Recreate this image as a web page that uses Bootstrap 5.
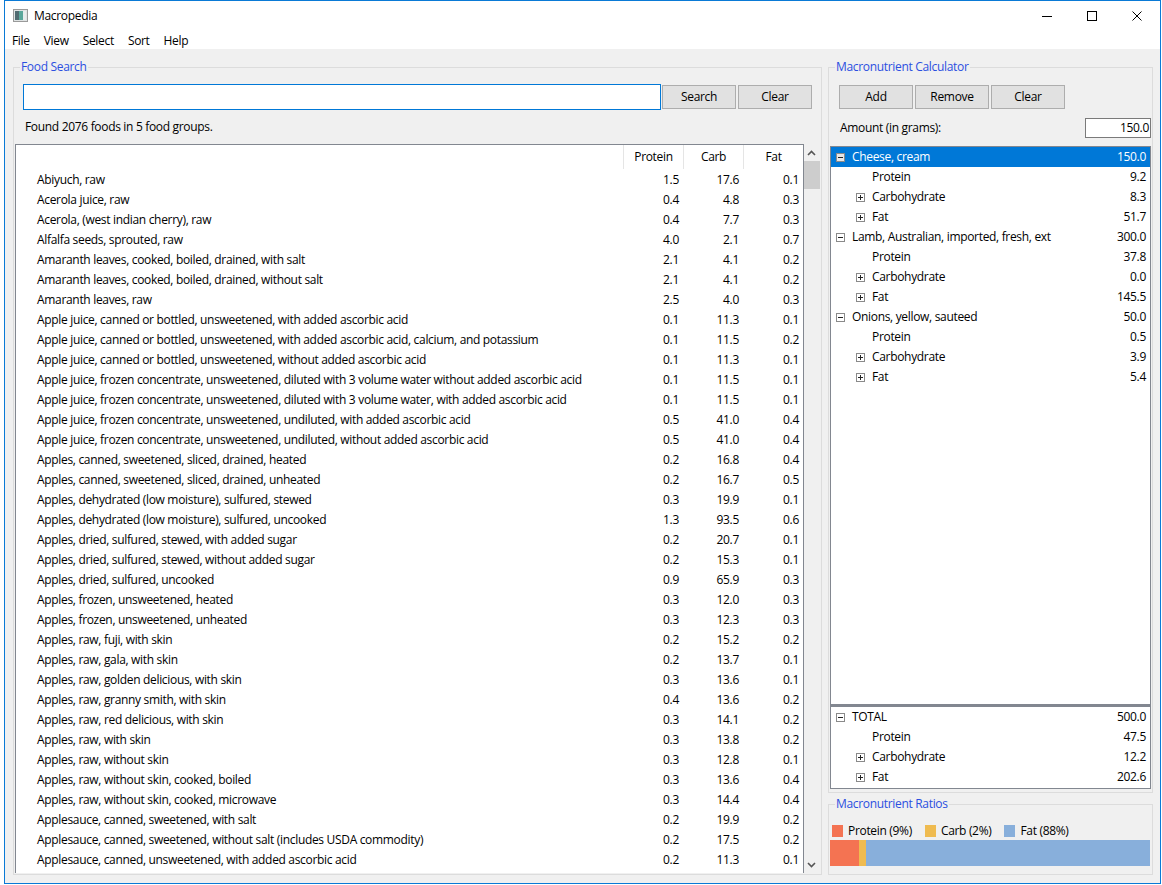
<!DOCTYPE html>
<html lang="en"><head><meta charset="utf-8"><title>Macropedia</title>
<link href="https://cdn.jsdelivr.net/npm/bootstrap@5.3.0/dist/css/bootstrap.min.css" rel="stylesheet">
<style>
html,body{height:100%;margin:0;background:#fff;overflow:hidden}
body{font-family:"Open Sans","Noto Sans",sans-serif;font-size:12px;line-height:20px;color:#000;letter-spacing:-.32px}
.appwin{position:relative;margin-left:4px;width:1157px;height:884px;border:1px solid #0a7ad6;background:#f0f0f0;display:flex;flex-direction:column}
.titlebar{height:29px;background:#fff;display:flex;align-items:center;padding-left:8px;gap:6px;flex:none}
.appicon{width:15px;height:13px;flex:none}
.winbtns{margin-left:auto;display:flex;padding-right:1px}
.winbtns span{width:45px;height:29px;display:flex;align-items:center;justify-content:center}
.menubar{height:19px;background:#fff;display:flex;padding-left:7px;flex:none;line-height:22px}
.menubar span{margin-right:14px}
.mainarea{flex:1;display:flex;padding:18px 7px 8px 8px;gap:6px;min-height:0}
.grp{border:1px solid #dcdcdc;position:relative}
.grptitle{position:absolute;top:-10px;left:6px;background:#f0f0f0;color:#2b4fe0;padding:0 1px;line-height:18px}
.leftgrp{width:809px;display:flex;flex-direction:column;padding:16px 1px 0 1px}
.rightcol{width:325px;display:flex;flex-direction:column;gap:11px}
.calcgrp{flex:1;display:flex;flex-direction:column;min-height:0;padding:16px 1px 0 1px}
.ratiogrp{height:71px;padding:0 1px}
.searchrow{display:flex;align-items:stretch;padding-left:8px;height:26px;flex:none}
.searchbox{width:638px;border:1px solid #0078d7;background:#fff}
.qbtn{width:74px;height:24px;margin:1px 0 0 0;background:#e1e1e1;border:1px solid #adadad;text-align:center;line-height:22px;color:#000;padding:0;font-size:12px;border-radius:0;letter-spacing:inherit}
.searchrow .qbtn{margin-left:2px}
.searchrow .searchbox+.qbtn{margin-left:1px}
.foundline{padding:7px 0 0 10px;height:34px;line-height:20px;flex:none}
.listwrap{flex:1;display:flex;min-height:0}
.listframe{width:789px;background:#fff;border:1px solid #828790;border-bottom:0;overflow:hidden;flex:none;margin-bottom:1px}
.headrow{display:flex;height:25px;justify-content:flex-end;align-items:flex-start}
.hcell{width:60px;height:24px;border-left:1px solid #e5e5e5;text-align:center;line-height:24px}
.frow{display:flex;height:20px}
.fname{width:606px;padding-left:21px;white-space:nowrap;overflow:hidden}
.fnum{width:60px;text-align:right;padding-right:3px}
.vscroll{width:16px;background:#f0f0f0;position:relative;flex:none}
.vthumb{position:absolute;top:17px;left:0;width:16px;height:28px;background:#cdcdcd}
.varrow{position:absolute;left:3px;width:9px;height:6px}
.varrow.up{top:6px}.varrow.dn{bottom:6px}
.calcbtns{display:flex;gap:2px;padding-left:9px;height:26px;flex:none}
.amountrow{display:flex;justify-content:space-between;align-items:center;height:36px;padding:0 0 0 10px;flex:none}
.amountbox{width:66px;height:20px;border:1px solid #7a7a7a;background:#fff;text-align:right;line-height:18px;padding-right:1px}
.treebox{background:#fff;border:1px solid #828790;flex:1;min-height:0;overflow:hidden}
.treebox.tot{flex:none;height:84px;border-top:2px solid #828790;margin-bottom:3px}
.tr{display:flex;height:20px;align-items:center;padding-right:4px}
.tr.sel{background:#0078d7;color:#fff}
.tl{flex:1;white-space:nowrap}
.exp{width:9px;height:9px;flex:none;display:block}
.lv0 .exp{margin:0 7px 0 5px}
.lv1 .exp{margin:0 7px 0 25px}
.lv1.leaf .tl{padding-left:41px}
.legendrow{display:flex;align-items:center;height:18px;margin-top:17px;padding-left:2px}
.swatch{width:11px;height:12px;margin-right:5px;flex:none}
.legendtxt{margin-right:13px}
.barrow{display:flex;height:26px}
.barp{background:#f47352}.barc{background:#efbb50}.barf{background:#88afdb}
</style></head><body>
<div class="appwin">
<div class="titlebar">
<svg class="appicon" viewBox="0 0 15 13"><rect x=".5" y=".5" width="14" height="12" fill="#dfe3e3" stroke="#9a9a9a"/><rect x="2" y="2" width="4" height="9" fill="#4f6a70"/><rect x="6" y="2" width="4" height="9" fill="#5aa79b"/><rect x="10" y="2" width="3" height="9" fill="#e8ecec"/></svg>
<span>Macropedia</span>
<div class="winbtns">
<span><svg width="10" height="10"><path d="M0 5.5h10" stroke="#000"/></svg></span>
<span><svg width="10" height="10"><rect x=".5" y=".5" width="9" height="9" fill="none" stroke="#000"/></svg></span>
<span><svg width="10" height="10"><path d="M.5.5l9 9M9.5.5l-9 9" stroke="#000" fill="none"/></svg></span>
</div></div>
<div class="menubar"><span>File</span><span>View</span><span>Select</span><span>Sort</span><span>Help</span></div>
<div class="mainarea">
<section class="grp leftgrp"><div class="grptitle">Food Search</div>
<div class="searchrow"><div class="searchbox"></div><button class="qbtn">Search</button><button class="qbtn">Clear</button></div>
<div class="foundline">Found 2076 foods in 5 food groups.</div>
<div class="listwrap"><div class="listframe">
<div class="headrow"><div class="hcell">Protein</div><div class="hcell">Carb</div><div class="hcell">Fat</div></div>
<div class="frow"><div class="fname">Abiyuch, raw</div><div class="fnum">1.5</div><div class="fnum">17.6</div><div class="fnum">0.1</div></div>
<div class="frow"><div class="fname">Acerola juice, raw</div><div class="fnum">0.4</div><div class="fnum">4.8</div><div class="fnum">0.3</div></div>
<div class="frow"><div class="fname">Acerola, (west indian cherry), raw</div><div class="fnum">0.4</div><div class="fnum">7.7</div><div class="fnum">0.3</div></div>
<div class="frow"><div class="fname">Alfalfa seeds, sprouted, raw</div><div class="fnum">4.0</div><div class="fnum">2.1</div><div class="fnum">0.7</div></div>
<div class="frow"><div class="fname">Amaranth leaves, cooked, boiled, drained, with salt</div><div class="fnum">2.1</div><div class="fnum">4.1</div><div class="fnum">0.2</div></div>
<div class="frow"><div class="fname">Amaranth leaves, cooked, boiled, drained, without salt</div><div class="fnum">2.1</div><div class="fnum">4.1</div><div class="fnum">0.2</div></div>
<div class="frow"><div class="fname">Amaranth leaves, raw</div><div class="fnum">2.5</div><div class="fnum">4.0</div><div class="fnum">0.3</div></div>
<div class="frow"><div class="fname">Apple juice, canned or bottled, unsweetened, with added ascorbic acid</div><div class="fnum">0.1</div><div class="fnum">11.3</div><div class="fnum">0.1</div></div>
<div class="frow"><div class="fname">Apple juice, canned or bottled, unsweetened, with added ascorbic acid, calcium, and potassium</div><div class="fnum">0.1</div><div class="fnum">11.5</div><div class="fnum">0.2</div></div>
<div class="frow"><div class="fname">Apple juice, canned or bottled, unsweetened, without added ascorbic acid</div><div class="fnum">0.1</div><div class="fnum">11.3</div><div class="fnum">0.1</div></div>
<div class="frow"><div class="fname">Apple juice, frozen concentrate, unsweetened, diluted with 3 volume water without added ascorbic acid</div><div class="fnum">0.1</div><div class="fnum">11.5</div><div class="fnum">0.1</div></div>
<div class="frow"><div class="fname">Apple juice, frozen concentrate, unsweetened, diluted with 3 volume water, with added ascorbic acid</div><div class="fnum">0.1</div><div class="fnum">11.5</div><div class="fnum">0.1</div></div>
<div class="frow"><div class="fname">Apple juice, frozen concentrate, unsweetened, undiluted, with added ascorbic acid</div><div class="fnum">0.5</div><div class="fnum">41.0</div><div class="fnum">0.4</div></div>
<div class="frow"><div class="fname">Apple juice, frozen concentrate, unsweetened, undiluted, without added ascorbic acid</div><div class="fnum">0.5</div><div class="fnum">41.0</div><div class="fnum">0.4</div></div>
<div class="frow"><div class="fname">Apples, canned, sweetened, sliced, drained, heated</div><div class="fnum">0.2</div><div class="fnum">16.8</div><div class="fnum">0.4</div></div>
<div class="frow"><div class="fname">Apples, canned, sweetened, sliced, drained, unheated</div><div class="fnum">0.2</div><div class="fnum">16.7</div><div class="fnum">0.5</div></div>
<div class="frow"><div class="fname">Apples, dehydrated (low moisture), sulfured, stewed</div><div class="fnum">0.3</div><div class="fnum">19.9</div><div class="fnum">0.1</div></div>
<div class="frow"><div class="fname">Apples, dehydrated (low moisture), sulfured, uncooked</div><div class="fnum">1.3</div><div class="fnum">93.5</div><div class="fnum">0.6</div></div>
<div class="frow"><div class="fname">Apples, dried, sulfured, stewed, with added sugar</div><div class="fnum">0.2</div><div class="fnum">20.7</div><div class="fnum">0.1</div></div>
<div class="frow"><div class="fname">Apples, dried, sulfured, stewed, without added sugar</div><div class="fnum">0.2</div><div class="fnum">15.3</div><div class="fnum">0.1</div></div>
<div class="frow"><div class="fname">Apples, dried, sulfured, uncooked</div><div class="fnum">0.9</div><div class="fnum">65.9</div><div class="fnum">0.3</div></div>
<div class="frow"><div class="fname">Apples, frozen, unsweetened, heated</div><div class="fnum">0.3</div><div class="fnum">12.0</div><div class="fnum">0.3</div></div>
<div class="frow"><div class="fname">Apples, frozen, unsweetened, unheated</div><div class="fnum">0.3</div><div class="fnum">12.3</div><div class="fnum">0.3</div></div>
<div class="frow"><div class="fname">Apples, raw, fuji, with skin</div><div class="fnum">0.2</div><div class="fnum">15.2</div><div class="fnum">0.2</div></div>
<div class="frow"><div class="fname">Apples, raw, gala, with skin</div><div class="fnum">0.2</div><div class="fnum">13.7</div><div class="fnum">0.1</div></div>
<div class="frow"><div class="fname">Apples, raw, golden delicious, with skin</div><div class="fnum">0.3</div><div class="fnum">13.6</div><div class="fnum">0.1</div></div>
<div class="frow"><div class="fname">Apples, raw, granny smith, with skin</div><div class="fnum">0.4</div><div class="fnum">13.6</div><div class="fnum">0.2</div></div>
<div class="frow"><div class="fname">Apples, raw, red delicious, with skin</div><div class="fnum">0.3</div><div class="fnum">14.1</div><div class="fnum">0.2</div></div>
<div class="frow"><div class="fname">Apples, raw, with skin</div><div class="fnum">0.3</div><div class="fnum">13.8</div><div class="fnum">0.2</div></div>
<div class="frow"><div class="fname">Apples, raw, without skin</div><div class="fnum">0.3</div><div class="fnum">12.8</div><div class="fnum">0.1</div></div>
<div class="frow"><div class="fname">Apples, raw, without skin, cooked, boiled</div><div class="fnum">0.3</div><div class="fnum">13.6</div><div class="fnum">0.4</div></div>
<div class="frow"><div class="fname">Apples, raw, without skin, cooked, microwave</div><div class="fnum">0.3</div><div class="fnum">14.4</div><div class="fnum">0.4</div></div>
<div class="frow"><div class="fname">Applesauce, canned, sweetened, with salt</div><div class="fnum">0.2</div><div class="fnum">19.9</div><div class="fnum">0.2</div></div>
<div class="frow"><div class="fname">Applesauce, canned, sweetened, without salt (includes USDA commodity)</div><div class="fnum">0.2</div><div class="fnum">17.5</div><div class="fnum">0.2</div></div>
<div class="frow"><div class="fname">Applesauce, canned, unsweetened, with added ascorbic acid</div><div class="fnum">0.2</div><div class="fnum">11.3</div><div class="fnum">0.1</div></div>
</div>
<div class="vscroll"><svg class="varrow up" viewBox="0 0 9 6"><path d="M1 5l3.5-3.5L8 5" fill="none" stroke="#555" stroke-width="1.6"/></svg><div class="vthumb"></div><svg class="varrow dn" viewBox="0 0 9 6"><path d="M1 1l3.5 3.5L8 1" fill="none" stroke="#555" stroke-width="1.6"/></svg></div>
</div></section>
<div class="rightcol">
<section class="grp calcgrp"><div class="grptitle">Macronutrient Calculator</div>
<div class="calcbtns"><button class="qbtn">Add</button><button class="qbtn">Remove</button><button class="qbtn">Clear</button></div>
<div class="amountrow"><span>Amount (in grams):</span><div class="amountbox">150.0</div></div>
<div class="treebox">
<div class="tr lv0 sel"><svg class="exp" viewBox="0 0 9 9"><rect x=".5" y=".5" width="8" height="8" fill="#e6e6e6" stroke="#8a8a8a"/><path d="M2 4.5h5" stroke="#222"/></svg><div class="tl">Cheese, cream</div><div>150.0</div></div>
<div class="tr lv1 leaf"><div class="tl">Protein</div><div>9.2</div></div>
<div class="tr lv1"><svg class="exp" viewBox="0 0 9 9"><rect x=".5" y=".5" width="8" height="8" fill="#fff" stroke="#8a8a8a"/><path d="M2 4.5h5M4.5 2v5" stroke="#222"/></svg><div class="tl">Carbohydrate</div><div>8.3</div></div>
<div class="tr lv1"><svg class="exp" viewBox="0 0 9 9"><rect x=".5" y=".5" width="8" height="8" fill="#fff" stroke="#8a8a8a"/><path d="M2 4.5h5M4.5 2v5" stroke="#222"/></svg><div class="tl">Fat</div><div>51.7</div></div>
<div class="tr lv0"><svg class="exp" viewBox="0 0 9 9"><rect x=".5" y=".5" width="8" height="8" fill="#fff" stroke="#8a8a8a"/><path d="M2 4.5h5" stroke="#222"/></svg><div class="tl">Lamb, Australian, imported, fresh, ext</div><div>300.0</div></div>
<div class="tr lv1 leaf"><div class="tl">Protein</div><div>37.8</div></div>
<div class="tr lv1"><svg class="exp" viewBox="0 0 9 9"><rect x=".5" y=".5" width="8" height="8" fill="#fff" stroke="#8a8a8a"/><path d="M2 4.5h5M4.5 2v5" stroke="#222"/></svg><div class="tl">Carbohydrate</div><div>0.0</div></div>
<div class="tr lv1"><svg class="exp" viewBox="0 0 9 9"><rect x=".5" y=".5" width="8" height="8" fill="#fff" stroke="#8a8a8a"/><path d="M2 4.5h5M4.5 2v5" stroke="#222"/></svg><div class="tl">Fat</div><div>145.5</div></div>
<div class="tr lv0"><svg class="exp" viewBox="0 0 9 9"><rect x=".5" y=".5" width="8" height="8" fill="#fff" stroke="#8a8a8a"/><path d="M2 4.5h5" stroke="#222"/></svg><div class="tl">Onions, yellow, sauteed</div><div>50.0</div></div>
<div class="tr lv1 leaf"><div class="tl">Protein</div><div>0.5</div></div>
<div class="tr lv1"><svg class="exp" viewBox="0 0 9 9"><rect x=".5" y=".5" width="8" height="8" fill="#fff" stroke="#8a8a8a"/><path d="M2 4.5h5M4.5 2v5" stroke="#222"/></svg><div class="tl">Carbohydrate</div><div>3.9</div></div>
<div class="tr lv1"><svg class="exp" viewBox="0 0 9 9"><rect x=".5" y=".5" width="8" height="8" fill="#fff" stroke="#8a8a8a"/><path d="M2 4.5h5M4.5 2v5" stroke="#222"/></svg><div class="tl">Fat</div><div>5.4</div></div>
</div>
<div class="treebox tot">
<div class="tr lv0"><svg class="exp" viewBox="0 0 9 9"><rect x=".5" y=".5" width="8" height="8" fill="#fff" stroke="#8a8a8a"/><path d="M2 4.5h5" stroke="#222"/></svg><div class="tl">TOTAL</div><div>500.0</div></div>
<div class="tr lv1 leaf"><div class="tl">Protein</div><div>47.5</div></div>
<div class="tr lv1"><svg class="exp" viewBox="0 0 9 9"><rect x=".5" y=".5" width="8" height="8" fill="#fff" stroke="#8a8a8a"/><path d="M2 4.5h5M4.5 2v5" stroke="#222"/></svg><div class="tl">Carbohydrate</div><div>12.2</div></div>
<div class="tr lv1"><svg class="exp" viewBox="0 0 9 9"><rect x=".5" y=".5" width="8" height="8" fill="#fff" stroke="#8a8a8a"/><path d="M2 4.5h5M4.5 2v5" stroke="#222"/></svg><div class="tl">Fat</div><div>202.6</div></div>
</div>
</section>
<section class="grp ratiogrp"><div class="grptitle">Macronutrient Ratios</div>
<div class="legendrow"><span class="swatch barp"></span><span class="legendtxt">Protein (9%)</span><span class="swatch barc"></span><span class="legendtxt">Carb (2%)</span><span class="swatch barf"></span><span class="legendtxt">Fat (88%)</span></div>
<div class="barrow"><div class="barp" style="width:29px"></div><div class="barc" style="width:7px"></div><div class="barf" style="width:284px"></div></div>
</section>
</div></div></div>
<script src="https://cdn.jsdelivr.net/npm/bootstrap@5.3.0/dist/js/bootstrap.bundle.min.js"></script>
</body></html>
